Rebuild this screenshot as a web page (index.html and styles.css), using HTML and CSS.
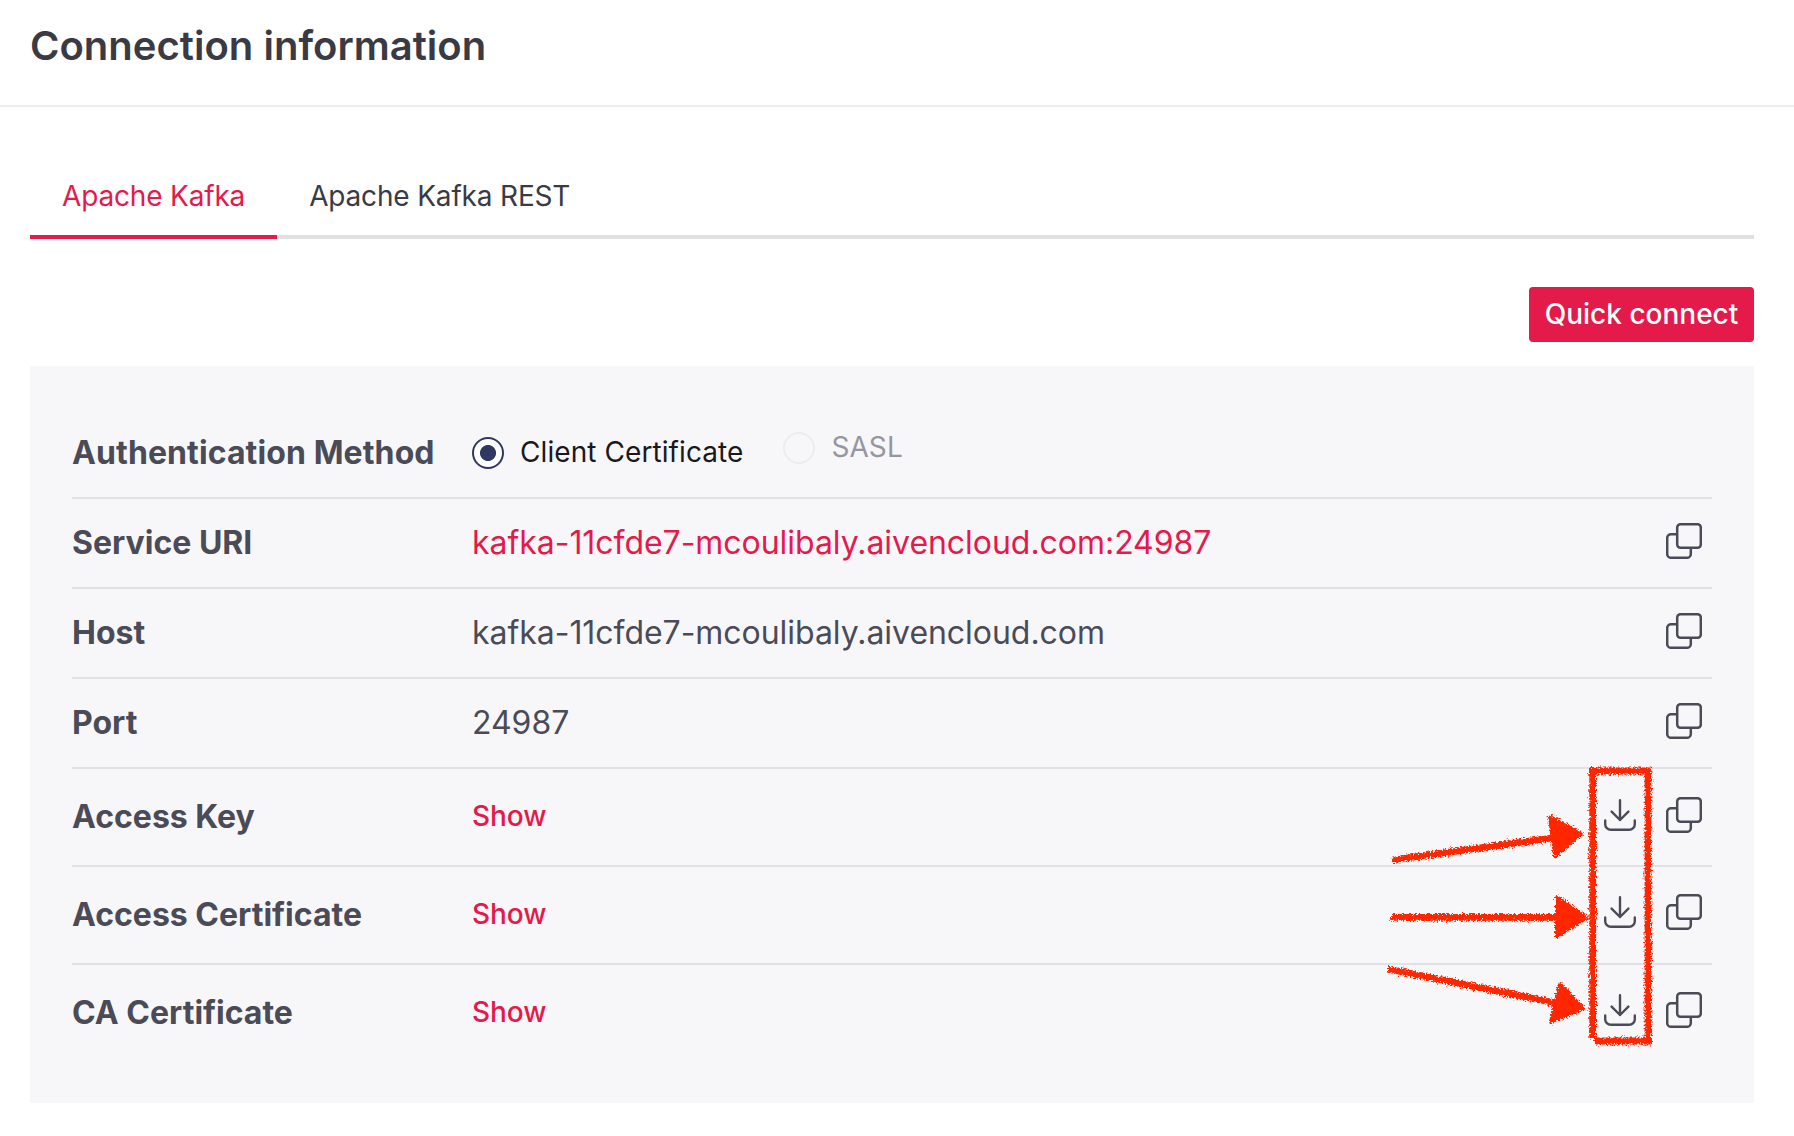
FILE: index.html
```html
<!DOCTYPE html>
<html lang="en">
<head>
<meta charset="utf-8">
<title>Connection information</title>
<link rel="stylesheet" href="styles.css">
</head>
<body>
<svg class="defs" width="0" height="0">
  <symbol id="copy" viewBox="0 0 36 36"><g fill="none" stroke="currentColor" stroke-width="2.5" stroke-linejoin="round"><rect x="11.2" y="1.2" width="23.6" height="23.6" rx="3.2"/><path d="M11.2 11.2H5A3.8 3.8 0 0 0 1.2 15V31A3.8 3.8 0 0 0 5 34.8H21A3.8 3.8 0 0 0 24.8 31V24.8"/></g></symbol>
  <symbol id="download" viewBox="0 0 32 32"><path d="M16 1.2V21M7.6 12.6L16 21L24.4 12.6M1.2 21.4V25.2A5.6 5.6 0 0 0 6.8 30.8H25.2A5.6 5.6 0 0 0 30.8 25.2V21.4" fill="none" stroke="currentColor" stroke-width="2.4" stroke-linecap="round" stroke-linejoin="round"/></symbol>
</svg>
<header class="header"><h1 class="title">Connection information</h1></header>
<main class="content">
  <nav class="tabs">
    <a class="tab tab-active">Apache Kafka</a>
    <a class="tab">Apache Kafka REST</a>
  </nav>
  <div class="actions"><button class="button">Quick connect</button></div>
  <section class="panel">
    <div class="row">
      <div class="label label-auth">Authentication Method</div>
      <div class="value radios">
        <label class="option"><i class="radio radio-on"></i><span>Client Certificate</span></label>
        <label class="option option-disabled"><i class="radio"></i><span>SASL</span></label>
      </div>
    </div>
    <div class="row">
      <div class="label">Service URI</div>
      <div class="value link">kafka-11cfde7-mcoulibaly.aivencloud.com:24987</div>
      <div class="icons"><svg class="copy"><use href="#copy"/></svg></div>
    </div>
    <div class="row">
      <div class="label">Host</div>
      <div class="value">kafka-11cfde7-mcoulibaly.aivencloud.com</div>
      <div class="icons"><svg class="copy"><use href="#copy"/></svg></div>
    </div>
    <div class="row">
      <div class="label">Port</div>
      <div class="value">24987</div>
      <div class="icons"><svg class="copy"><use href="#copy"/></svg></div>
    </div>
    <div class="row row-tall">
      <div class="label">Access Key</div>
      <div class="value show">Show</div>
      <div class="icons"><svg class="download"><use href="#download"/></svg><svg class="copy"><use href="#copy"/></svg></div>
    </div>
    <div class="row row-tall">
      <div class="label">Access Certificate</div>
      <div class="value show">Show</div>
      <div class="icons icons-raised"><svg class="download"><use href="#download"/></svg><svg class="copy"><use href="#copy"/></svg></div>
    </div>
    <div class="row row-tall">
      <div class="label">CA Certificate</div>
      <div class="value show">Show</div>
      <div class="icons icons-raised"><svg class="download"><use href="#download"/></svg><svg class="copy"><use href="#copy"/></svg></div>
    </div>
  </section>
</main>
<svg class="annotations" viewBox="1380 760 280 290">
  <filter id="crayon" filterUnits="userSpaceOnUse" x="1380" y="760" width="280" height="290">
    <feTurbulence type="fractalNoise" baseFrequency="0.6" numOctaves="2" seed="4" result="noise"/>
    <feDisplacementMap in="SourceGraphic" in2="noise" scale="7" xChannelSelector="R" yChannelSelector="G"/>
  </filter>
  <g filter="url(#crayon)" fill="#ff2600" stroke="#ff2600" stroke-linejoin="round">
    <path d="M1592.7 767V1039M1648 767.500V1044M1589 771H1651M1595 1041H1652" fill="none" stroke-width="6.800"/>
    <path d="M1392 860L1552 838M1391 917.300H1558M1388 969L1556 1003" fill="none" stroke-width="6.800"/>
    <path d="M1550 817L1581 833.500L1555 856ZM1557 897.500L1586 917.500L1557 936ZM1560 984.500L1583 1008.500L1551 1021.500Z" stroke-width="4"/>
  </g>
</svg>
</body>
</html>
```
FILE: styles.css
```css
* { box-sizing: border-box; }
body { margin: 0; background: #fff; color: #4a4b57; font-family: Inter, "Liberation Sans", sans-serif; }
.defs { position: absolute; }
.header { height: 107px; padding: 22px 30px 0; border-bottom: 2px solid #ededf0; }
.title { margin: 0; font-size: 40px; line-height: 48px; font-weight: 600; letter-spacing: 0.02px; color: #3a3a44; }
.content { padding: 48px 40px 0 30px; }
.tabs { display: flex; height: 84px; border-bottom: 4px solid #e1e1e3; }
.tab { height: 84px; padding: 21px 32px 0; font-size: 28px; line-height: 40px; letter-spacing: -0.17px; color: #3a3a44; border-bottom: 4px solid transparent; }
.tab-active { color: #e41a4a; border-bottom-color: #e41a4a; }
.actions { display: flex; justify-content: flex-end; padding: 48px 0 24px; }
.button { width: 225px; height: 55px; padding: 0; border: 0; border-radius: 4px; background: #e41a4a; color: #fff; font: 500 28px/53px Inter, "Liberation Sans", sans-serif; }
.panel { height: 737px; padding: 43px 42px 0; background: #f7f7fa; }
.row { display: flex; align-items: center; height: 90px; border-bottom: 2px solid #e1e1e3; }
.row-tall { height: 98px; }
.row:last-child { border-bottom-color: transparent; }
.label { width: 400px; font-size: 32px; line-height: 48px; font-weight: 700; white-space: nowrap; }
.label-auth { letter-spacing: 0.1px; }
.value { flex: 1; font-size: 32px; line-height: 48px; letter-spacing: -0.04px; }
.link { color: #e41a4a; }
.show { padding-bottom: 2px; font-size: 28px; font-weight: 500; color: #e41a4a; }
.radios { display: flex; gap: 40px; font-size: 28px; line-height: 38px; letter-spacing: 0.08px; color: #19191d; }
.option { display: flex; align-items: center; gap: 16px; }
.option span { padding-bottom: 2px; }
.radio { display: flex; width: 32px; height: 32px; border: 2px solid #ededf0; border-radius: 50%; }
.radio-on { border-color: #30385f; background: radial-gradient(circle, #30385f 7.6px, #fff 8.4px); }
.option-disabled { color: #9696a0; padding-bottom: 10px; }
.icons { display: flex; align-items: center; gap: 30px; padding: 0 10px 4px 0; }
.icons-raised { padding-bottom: 6px; }
.copy { width: 36px; height: 36px; }
.download { width: 32px; height: 32px; }
.annotations { position: absolute; left: 1380px; top: 760px; width: 280px; height: 290px; }
```
